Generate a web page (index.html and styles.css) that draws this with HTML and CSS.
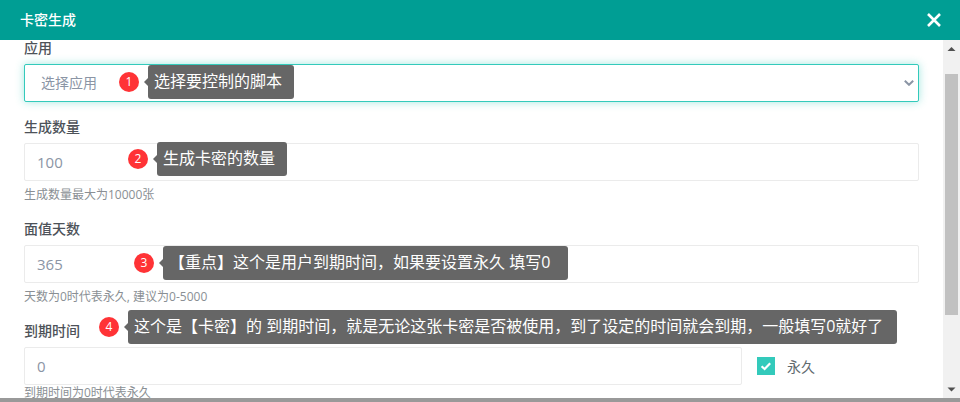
FILE: index.html
```html
<!DOCTYPE html>
<html lang="zh-CN">
<head>
<meta charset="utf-8">
<title>卡密生成</title>
<link rel="stylesheet" href="styles.css">
</head>
<body>
<div class="modal">
  <header class="modal-header">
    <h1 class="modal-title">卡密生成</h1>
    <svg class="close" width="16" height="16" viewBox="0 0 16 16"><path d="M2 2L14 14M14 2L2 14" stroke="#fff" stroke-width="2.6" fill="none"/></svg>
  </header>
  <div class="modal-main">
    <div class="modal-body">
      <form class="form">
        <div class="group">
          <div class="label label-first">应用</div>
          <div class="control control-select"><span>选择应用</span>
            <svg width="10" height="6" viewBox="0 0 10 6"><path d="M0.8 0.8L5 4.8L9.2 0.8" stroke="#8b95a5" stroke-width="2" fill="none"/></svg>
          </div>
        </div>
        <div class="group">
          <div class="label">生成数量</div>
          <div class="control">100</div>
          <div class="help">生成数量最大为10000张</div>
        </div>
        <div class="group">
          <div class="label">面值天数</div>
          <div class="control">365</div>
          <div class="help">天数为0时代表永久, 建议为0-5000</div>
        </div>
        <div class="group">
          <div class="label">到期时间</div>
          <div class="row">
            <div class="control grow">0</div>
            <div class="check">
              <svg width="18" height="18" viewBox="0 0 18 18"><rect width="18" height="18" fill="#33cabb"/><path d="M4.6 9.2L7.6 12L13.2 6.2" stroke="#fff" stroke-width="2.2" fill="none"/></svg>
              <span>永久</span>
            </div>
          </div>
          <div class="help help-tight">到期时间为0时代表永久</div>
        </div>
      </form>
    </div>
    <div class="scrollbar">
      <svg width="17" height="17" viewBox="0 0 17 17"><path d="M4.5 11H12.5L8.5 7Z" fill="#505050"/></svg>
      <div class="track"><div class="thumb"></div></div>
      <svg width="17" height="17" viewBox="0 0 17 17"><path d="M4.5 6.5H12.5L8.5 10.5Z" fill="#505050"/></svg>
    </div>
  </div>
  <div class="tip-mark mark-1"><b class="badge">1</b><span class="tip">选择要控制的脚本</span></div>
  <div class="tip-mark mark-2"><b class="badge">2</b><span class="tip">生成卡密的数量</span></div>
  <div class="tip-mark mark-3"><b class="badge">3</b><span class="tip tip-3">【重点】这个是用户到期时间，如果要设置永久 填写0</span></div>
  <div class="tip-mark mark-4"><b class="badge">4</b><span class="tip tip-4">这个是【卡密】的 到期时间，就是无论这张卡密是否被使用，到了设定的时间就会到期，一般填写0就好了</span></div>
</div>
<div class="page-edge"></div>
</body>
</html>
```
FILE: styles.css
```css
* { box-sizing: border-box; }
html, body { margin: 0; height: 100%; overflow: hidden; background: #fff; }
body {
  display: flex;
  flex-direction: column;
  font-family: "Open Sans", "Noto Sans CJK SC", sans-serif;
  font-size: 14px;
  color: #4d5259;
}
.modal { position: relative; flex: 1; min-height: 0; display: flex; flex-direction: column; }
.modal-header {
  height: 40px;
  flex: none;
  background: #009e94;
  display: flex;
  align-items: center;
  justify-content: space-between;
  padding: 0 18px 2px 20px;
}
.modal-title { margin: 0; font-size: 14px; font-weight: 500; color: #fff; }
.close { display: block; margin-top: 2px; }
.modal-main { flex: 1; min-height: 0; display: flex; }
.modal-body { flex: 1; min-width: 0; overflow: hidden; padding: 0 24px; }
.group { margin-bottom: 15px; }
.label { height: 20px; line-height: 20px; margin-bottom: 6px; font-weight: 500; color: #4d5259; }
.label-first { height: 16px; line-height: 16px; margin-bottom: 8px; }
.control {
  height: 38px;
  border: 1px solid #ebebeb;
  border-radius: 2px;
  padding: 0 12px;
  line-height: 36px;
  font-size: 15px;
  color: #8b95a5;
  background: #fff;
}
.control-select {
  border-color: #33cabb;
  box-shadow: 0 0 8px rgba(51, 202, 187, .45);
  padding: 0 4px 0 16px;
  font-size: 14px;
  display: flex;
  align-items: center;
  justify-content: space-between;
}
.row { display: flex; align-items: center; }
.grow { flex: 1; min-width: 0; }
.check { width: 177px; flex: none; padding-left: 15px; display: flex; align-items: center; gap: 12px; font-size: 14px; color: #616a6f; }
.check svg { display: block; }
.help { margin-top: 5px; height: 18px; line-height: 18px; font-size: 12px; color: #8a8f94; }
.help-tight { margin-top: 2px; height: 11px; line-height: 12px; }
.scrollbar { width: 17px; flex: none; background: #f1f1f1; display: flex; flex-direction: column; }
.scrollbar svg { display: block; flex: none; }
.track { flex: 1; min-height: 0; padding: 17px 2px 0; }
.thumb { height: 241px; background: #c1c1c1; }
.page-edge { height: 4px; flex: none; background: #999; }
.tip-mark { position: absolute; display: flex; align-items: center; gap: 9px; }
.mark-1 { left: 119px; top: 65px; }
.mark-2 { left: 128px; top: 142px; }
.mark-3 { left: 134px; top: 246px; }
.mark-4 { left: 99px; top: 310px; }
.badge {
  width: 20px;
  height: 20px;
  border-radius: 50%;
  background: #ff3336;
  color: #fff;
  font-size: 12px;
  font-weight: 400;
  line-height: 20px;
  text-align: center;
}
.tip {
  position: relative;
  height: 34px;
  line-height: 33px;
  padding: 0 12px 0 6px;
  background: #666;
  border-radius: 3px;
  color: #fff;
  font-size: 16px;
  white-space: nowrap;
}
.tip-3 { padding-right: 18px; }
.tip-4 { padding-right: 14px; }
.tip::before {
  content: "";
  position: absolute;
  left: -4px;
  top: 13px;
  border-style: solid;
  border-width: 4px 4px 4px 0;
  border-color: transparent #666 transparent transparent;
}
```
